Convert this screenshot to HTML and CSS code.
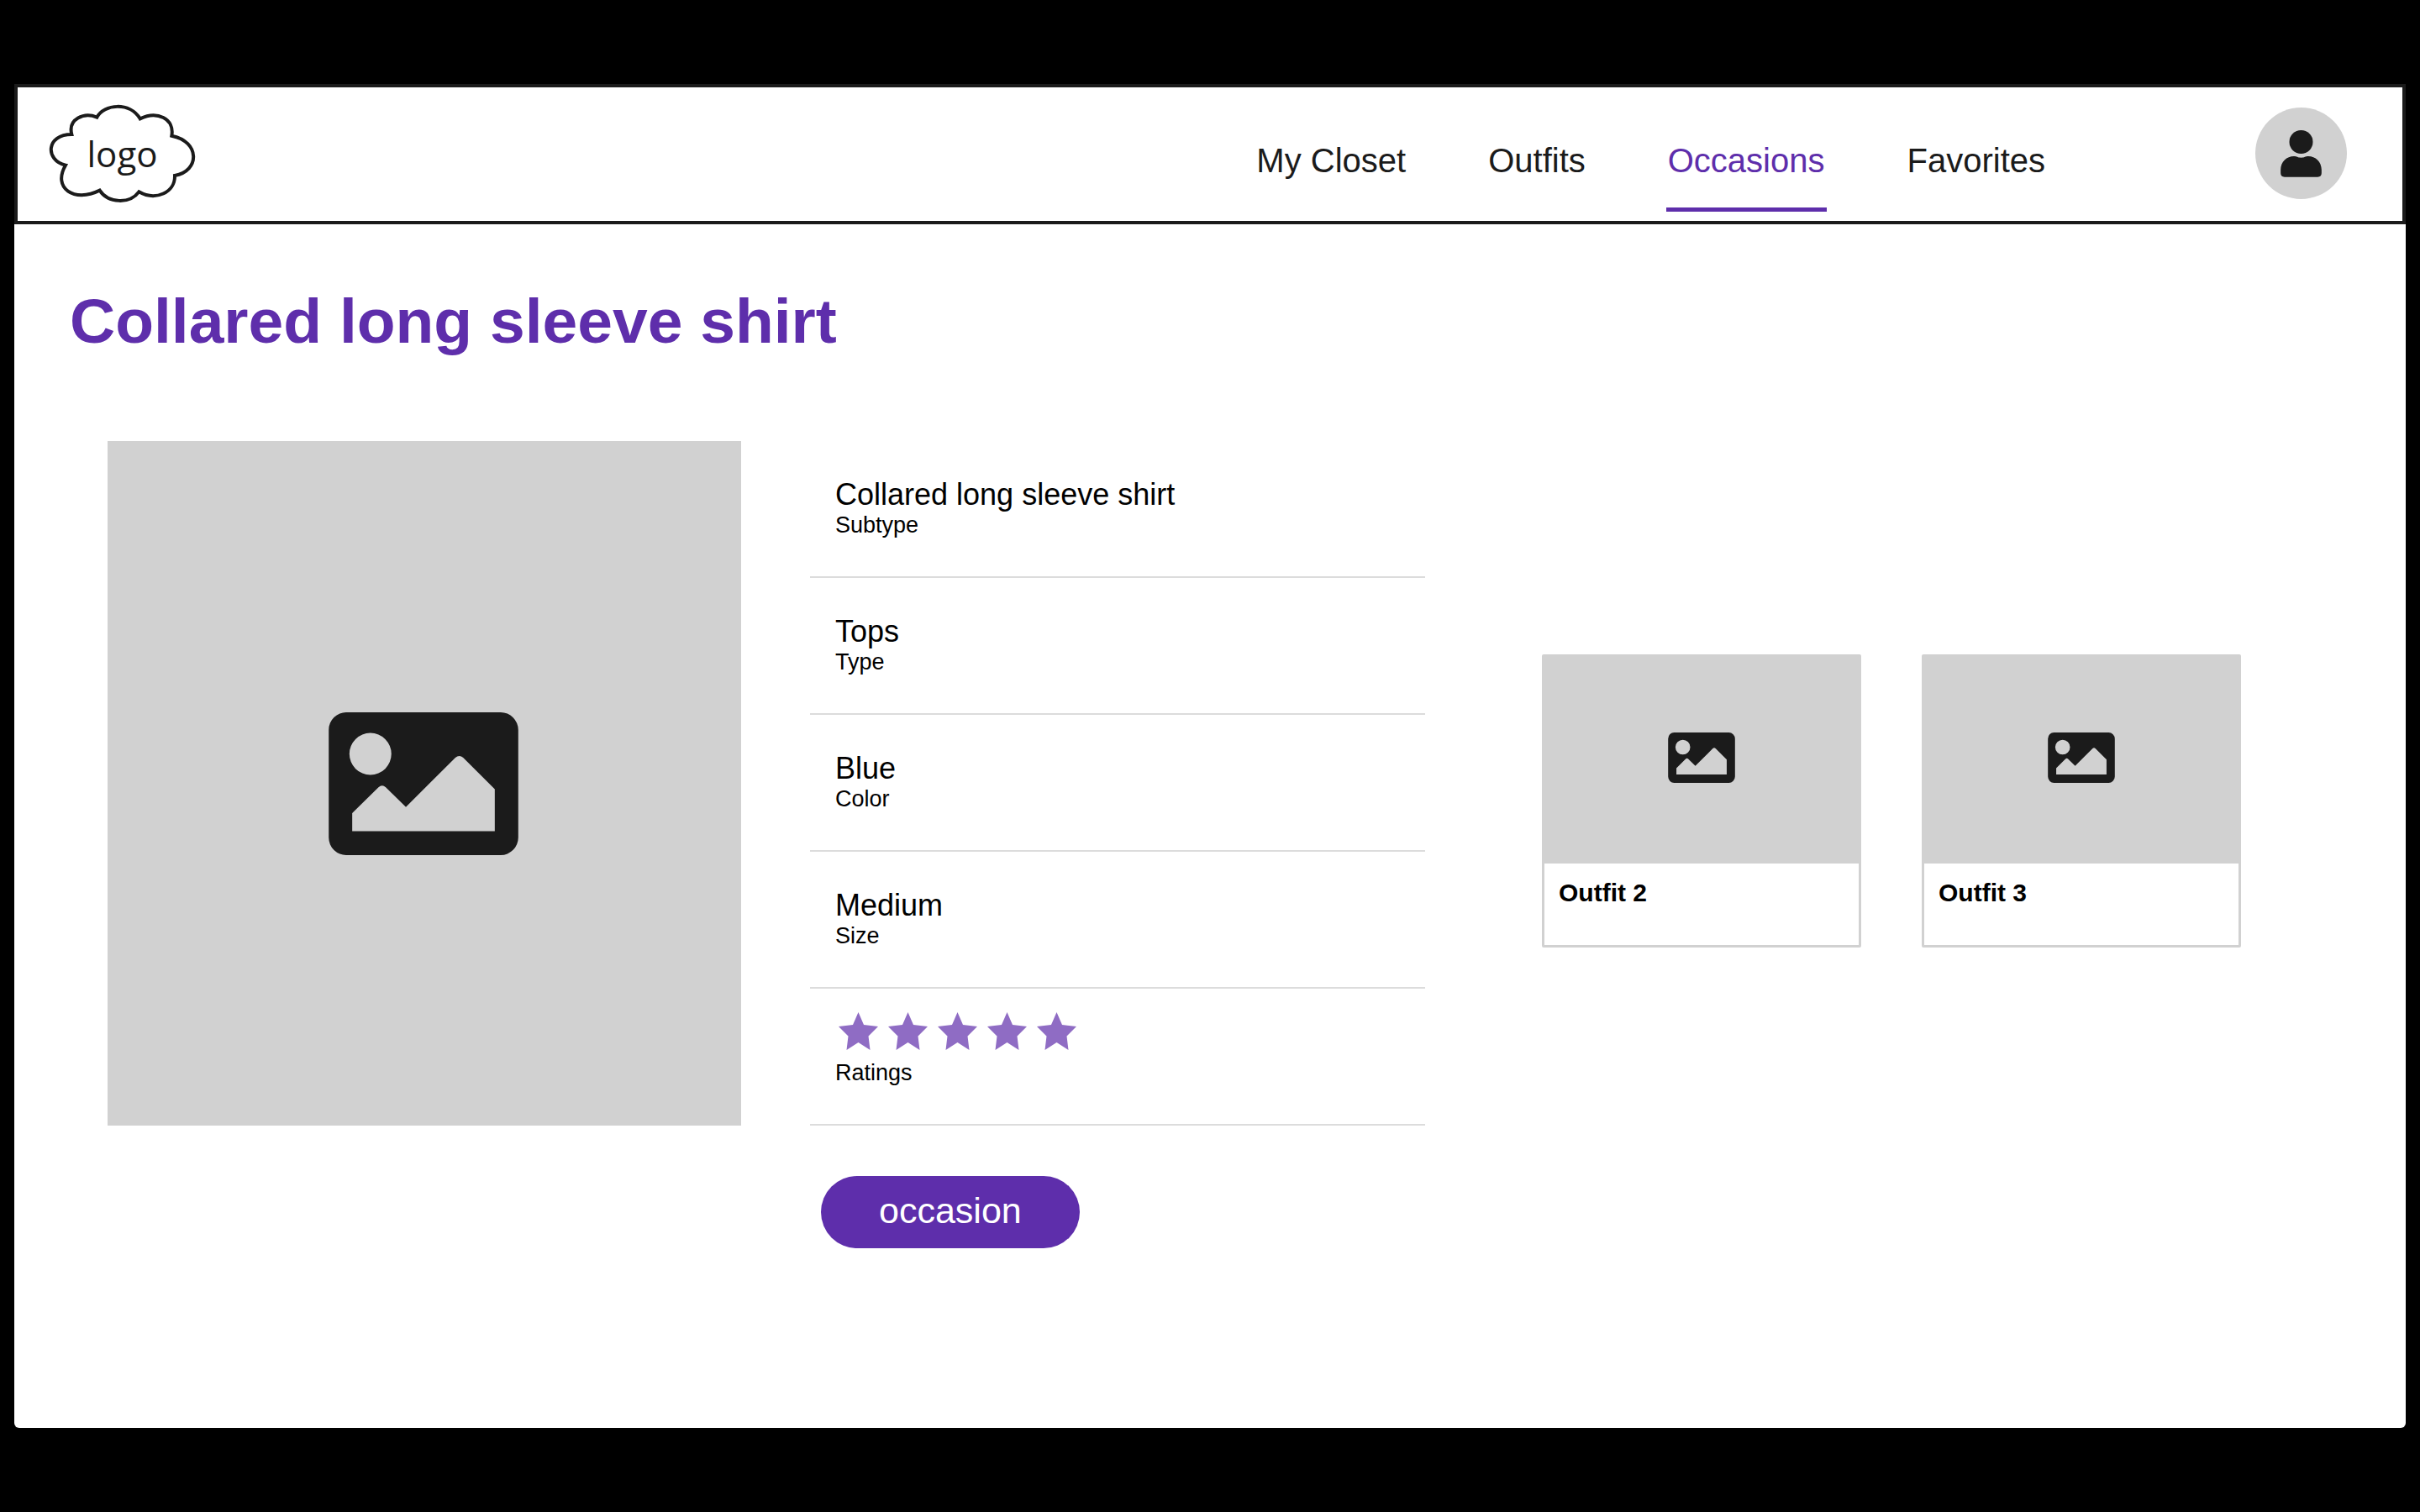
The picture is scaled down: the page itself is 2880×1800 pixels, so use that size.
FILE: index.html
```html
<!DOCTYPE html>
<html lang="en">
<head>
<meta charset="utf-8">
<meta name="viewport" content="width=device-width, initial-scale=1">
<title>Collared long sleeve shirt</title>
<link rel="stylesheet" href="styles.css">
</head>
<body>
<svg class="sprite" aria-hidden="true">
  <symbol id="icon-image" viewBox="93 83 678 511">
    <path fill="currentColor" fill-rule="evenodd" d="M157 83H708A63 63 0 0 1 771 146V531A63 63 0 0 1 708 594H157A63 63 0 0 1 93 531V146A63 63 0 0 1 157 83ZM242 157A75 75 0 1 0 242 307A75 75 0 1 0 242 157ZM177 444V508H687V358L574 245Q560 233 546 245L369 422L297 351Q284 339 271 351Z"/>
  </symbol>
  <symbol id="icon-star" viewBox="0 0 47 45">
    <path fill="currentColor" d="M23.500 0L30 15L47 17L35.500 28.500L37.500 45L23.500 36L9.500 45L11.500 28.500L0 17L17 15Z"/>
  </symbol>
</svg>
<div class="app">
  <header class="header">
    <a class="logo" href="#" aria-label="logo">
      <svg viewBox="174 132 525 354" aria-hidden="true">
        <path class="logo-cloud" d="M346 179C372 130 464 124 500 184C560 155 624 182 613 245C715 265 714 372 624 387C626 448 555 479 496 445C464 489 386 487 356 440C265 485 186 432 234 350C160 332 164 240 256 240C242 185 300 160 346 179Z"/>
      </svg>
      <span class="logo-text">logo</span>
    </a>
    <nav class="nav">
      <a class="nav-link" href="#">My Closet</a>
      <a class="nav-link" href="#">Outfits</a>
      <a class="nav-link active" href="#" aria-current="page">Occasions</a>
      <a class="nav-link" href="#">Favorites</a>
    </nav>
    <button class="avatar" type="button" aria-label="Profile">
      <svg class="avatar-icon" viewBox="344 225 146 168" aria-hidden="true">
        <circle cx="417" cy="267" r="42"/>
        <path d="M344 366C344 338 366 318 391 318C402 318 405 323 417 323C429 323 432 318 443 318C468 318 490 338 490 366V378Q490 392 476 392H358Q344 392 344 378Z"/>
      </svg>
    </button>
  </header>
  <main class="main">
    <h1 class="title">Collared long sleeve shirt</h1>
    <div class="product">
      <div class="photo">
        <svg class="photo-icon" aria-hidden="true"><use href="#icon-image"/></svg>
      </div>
      <section class="details">
        <dl class="facts">
          <div class="fact"><dd>Collared long sleeve shirt</dd><dt>Subtype</dt></div>
          <div class="fact"><dd>Tops</dd><dt>Type</dt></div>
          <div class="fact"><dd>Blue</dd><dt>Color</dt></div>
          <div class="fact"><dd>Medium</dd><dt>Size</dt></div>
          <div class="fact fact-rating">
            <dd class="stars" aria-label="5 stars">
              <svg class="star"><use href="#icon-star"/></svg>
              <svg class="star"><use href="#icon-star"/></svg>
              <svg class="star"><use href="#icon-star"/></svg>
              <svg class="star"><use href="#icon-star"/></svg>
              <svg class="star"><use href="#icon-star"/></svg>
            </dd>
            <dt>Ratings</dt>
          </div>
        </dl>
        <button class="tag" type="button">occasion</button>
      </section>
      <section class="outfits">
        <article class="card">
          <div class="card-photo"><svg class="card-icon" aria-hidden="true"><use href="#icon-image"/></svg></div>
          <h2 class="card-title">Outfit 2</h2>
        </article>
        <article class="card">
          <div class="card-photo"><svg class="card-icon" aria-hidden="true"><use href="#icon-image"/></svg></div>
          <h2 class="card-title">Outfit 3</h2>
        </article>
      </section>
    </div>
  </main>
</div>
</body>
</html>
```

FILE: styles.css
```css
:root {
  --ink: #1b1b1b;
  --purple: #5e2eab;
  --grey: #d1d1d1;
}

* {
  box-sizing: border-box;
}

body {
  margin: 0;
  padding: 100px 17px;
  background: #000;
  color: #000;
  font-family: "Liberation Sans", Arial, sans-serif;
}

.sprite {
  display: none;
}

.app {
  min-height: calc(100vh - 200px);
  background: #fff;
  border-radius: 0 0 6px 6px;
}

.header {
  display: flex;
  align-items: center;
  height: 167px;
  padding: 0 66px 2px 37px;
  border: 4px solid var(--ink);
}

.logo {
  display: grid;
  place-items: center;
  width: 175px;
  height: 118px;
  color: var(--ink);
  text-decoration: none;
}

.logo > * {
  grid-area: 1 / 1;
}

.logo svg {
  width: 175px;
  height: 118px;
}

.logo-cloud {
  fill: #fff;
  stroke: var(--ink);
  stroke-width: 12;
}

.logo-text {
  font-family: "Open Sans", sans-serif;
  font-size: 42px;
  line-height: 56px;
}

.nav {
  display: flex;
  gap: 94px;
  margin: 20px 0 0 auto;
}

.nav-link {
  height: 118px;
  padding: 34px 2px 0;
  border-bottom: 5px solid transparent;
  color: var(--ink);
  font-size: 40px;
  line-height: 46px;
  text-decoration: none;
}

.nav-link.active {
  border-color: var(--purple);
  color: var(--purple);
}

.avatar {
  display: grid;
  place-items: center;
  width: 109px;
  height: 109px;
  margin-left: 248px;
  padding: 0;
  border: 0;
  border-radius: 50%;
  background: var(--grey);
}

.avatar-icon {
  width: 49px;
  height: 56px;
  fill: var(--ink);
}

.main {
  padding: 72px 196px 80px 66px;
}

.title {
  margin: 0 0 100px;
  color: var(--purple);
  font-size: 75px;
  line-height: 86px;
}

.product {
  display: grid;
  grid-template-columns: 754fr 732fr 889fr;
  column-gap: 82px;
  align-items: start;
  padding-left: 45px;
}

.photo {
  display: grid;
  place-items: center;
  aspect-ratio: 754 / 815;
  padding-right: 2px;
  background: var(--grey);
}

.photo-icon {
  width: 226px;
  height: 170px;
  color: var(--ink);
}

.facts {
  margin: 0;
}

.fact {
  height: 163px;
  padding: 43px 30px 0;
  border-bottom: 2px solid #dcdcdc;
}

.fact dd {
  margin: 0;
  font-size: 36px;
  line-height: 42px;
}

.fact dt {
  font-size: 27px;
  line-height: 30px;
}

.fact-rating {
  padding-top: 28px;
}

.fact .stars {
  display: flex;
  gap: 12px;
  padding: 0 4px 12px;
}

.star {
  width: 47px;
  height: 45px;
  color: #8f6cc4;
}

.tag {
  display: block;
  margin: 60px 0 0 13px;
  padding: 16px 69px 20px;
  border: 0;
  border-radius: 43px;
  background: var(--purple);
  color: #fff;
  font-family: inherit;
  font-size: 43px;
  line-height: 50px;
}

.outfits {
  display: grid;
  grid-template-columns: 1fr 1fr;
  gap: 72px;
  padding: 254px 0 0 57px;
}

.card {
  min-height: 349px;
  border: 3px solid var(--grey);
  border-radius: 2px;
}

.card-photo {
  display: grid;
  place-items: center;
  height: 246px;
  padding-bottom: 6px;
  background: var(--grey);
}

.card-icon {
  width: 80px;
  height: 60px;
  color: var(--ink);
}

.card-title {
  margin: 0;
  padding: 17px;
  font-size: 30px;
  line-height: 36px;
}
```
